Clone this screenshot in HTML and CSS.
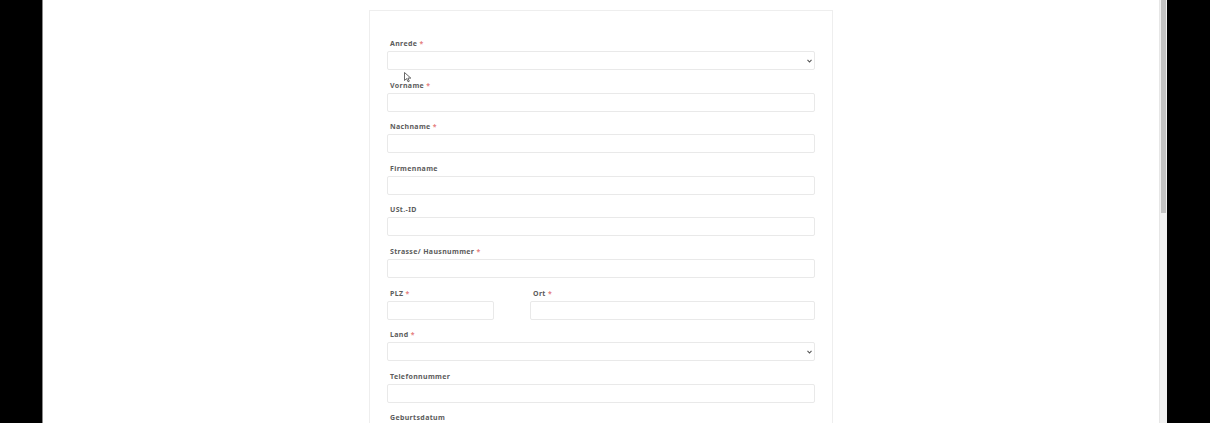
FILE: index.html
```html
<!doctype html>
<html>
<head>
<meta charset="utf-8">
<title>Registrierung</title>
<link rel="stylesheet" href="styles.css">
</head>
<body>
<div class="screen">
	<div class="sideLeft"></div>
	<div class="page">
		<form class="card">
			<div class="group">
				<label>Anrede <span class="req">*</span></label>
				<div class="field select">
					<svg width="5" height="4" viewBox="0 0 5 4"><path d="M0.5 0.8 L2.5 3 L4.5 0.8" fill="none" stroke="#555" stroke-width="1.1"/></svg>
				</div>
			</div>
			<div class="group">
				<label>Vorname <span class="req">*</span></label>
				<div class="field"></div>
			</div>
			<div class="group">
				<label>Nachname <span class="req">*</span></label>
				<div class="field"></div>
			</div>
			<div class="group">
				<label>Firmenname</label>
				<div class="field"></div>
			</div>
			<div class="group">
				<label>USt.-ID</label>
				<div class="field"></div>
			</div>
			<div class="group">
				<label>Strasse/ Hausnummer <span class="req">*</span></label>
				<div class="field"></div>
			</div>
			<div class="group split">
				<div>
					<label>PLZ <span class="req">*</span></label>
					<div class="field"></div>
				</div>
				<div>
					<label>Ort <span class="req">*</span></label>
					<div class="field"></div>
				</div>
			</div>
			<div class="group">
				<label>Land <span class="req">*</span></label>
				<div class="field select">
					<svg width="5" height="4" viewBox="0 0 5 4"><path d="M0.5 0.8 L2.5 3 L4.5 0.8" fill="none" stroke="#555" stroke-width="1.1"/></svg>
				</div>
			</div>
			<div class="group">
				<label>Telefonnummer</label>
				<div class="field"></div>
			</div>
			<div class="group">
				<label>Geburtsdatum</label>
			</div>
		</form>
		<svg class="cursor" width="8" height="11" viewBox="0 0 8 11"><path d="M0.5 0.5 L0.5 8.5 L2.6 6.6 L4 9.8 L5.3 9.2 L3.9 6.1 L6.8 6.1 Z" fill="#fff" stroke="#444" stroke-width="0.8"/></svg>
	</div>
	<div class="scrollbar"><div class="thumb"></div></div>
	<div class="sideRight"></div>
</div>
</body>
</html>
```

FILE: styles.css
```css
html, body{
	margin: 0;
	height: 423px;
	overflow: hidden;
	background: #000;
}

.screen{
	display: flex;
	height: 423px;
	overflow: hidden;
}

.sideLeft{
	width: 42px;
	background: #000;
	border-right: 1px solid #8a8a8a;
}

.sideRight{
	width: 43px;
	background: #000;
}

.page{
	flex: 1;
	background: #fff;
	position: relative;
	overflow: hidden;
	padding-top: 10px;
	display: flex;
	justify-content: center;
	align-items: flex-start;
}

.scrollbar{
	width: 8px;
	background: #f1f1f1;
	border-left: 1px solid #e6e6e6;
	box-sizing: border-box;
}

.thumb{
	height: 213px;
	margin: 0 1px;
	background: #c3c3c3;
}

.card{
	width: 428px;
	border: 1px solid #eeeeee;
	border-bottom: none;
	padding: 27px 17px 0 17px;
	font-family: "Noto Sans", "Open Sans", sans-serif;
}

.group{
	margin-bottom: 9.6px;
}

label{
	display: block;
	height: 10px;
	line-height: 12px;
	margin-bottom: 3px;
	padding-left: 3px;
	font-size: 7px;
	font-weight: bold;
	letter-spacing: 0.35px;
	color: #5c5c5c;
}

.req{
	color: #e58080;
}

.field{
	height: 19px;
	box-sizing: border-box;
	border: 1px solid #e9e9e9;
	border-radius: 2px;
	background: #fff;
}

.select{
	display: flex;
	align-items: center;
	justify-content: flex-end;
	padding-right: 2px;
}

.split{
	display: grid;
	grid-template-columns: 107px 1fr;
	column-gap: 36px;
}

.cursor{
	position: absolute;
	left: 361px;
	top: 72px;
}
```
